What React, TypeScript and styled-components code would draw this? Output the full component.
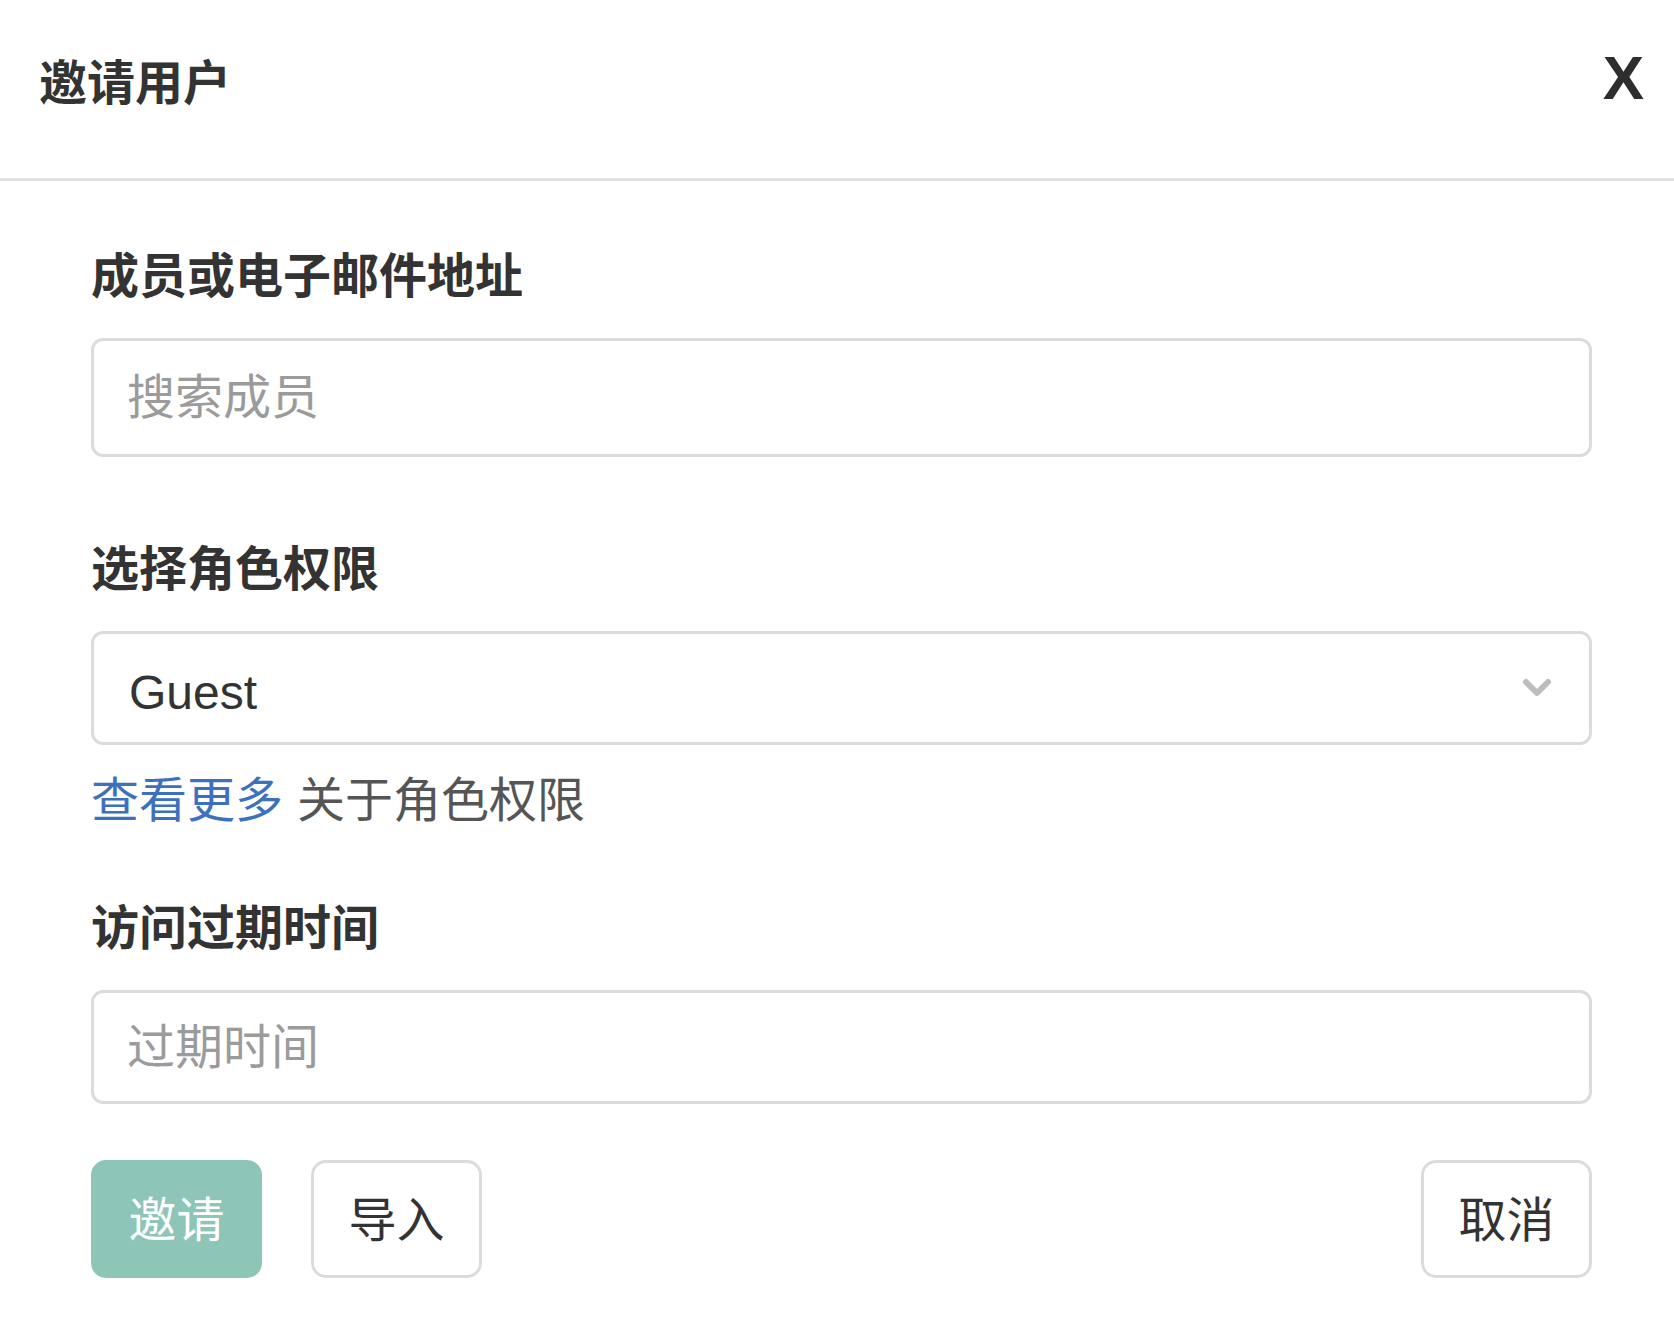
import React from "react";
import styled, { createGlobalStyle } from "styled-components";

const GlobalStyle = createGlobalStyle`
  html, body {
    margin: 0;
    padding: 0;
    background: #ffffff;
  }
  body {
    font-family: "Liberation Sans", "Noto Sans CJK SC", sans-serif;
    color: #333333;
  }
  * { box-sizing: border-box; }
`;

const Modal = styled.div`
  width: 1674px;
  min-height: 1318px;
  background: #ffffff;
  display: flex;
  flex-direction: column;
`;

const Header = styled.header`
  height: 181px;
  border-bottom: 3px solid #e1e1e1;
  display: flex;
  justify-content: space-between;
  align-items: flex-start;
  padding: 46px 30px 0 39px;
`;

const Title = styled.h2`
  margin: 0;
  font-size: 48px;
  line-height: 66px;
  font-weight: 700;
  color: #333333;
  font-family: "Noto Sans CJK SC", sans-serif;
`;

const CloseButton = styled.button`
  margin: 1px 0 0 0;
  padding: 0;
  border: none;
  background: none;
  font-family: "Liberation Sans", sans-serif;
  font-weight: 700;
  font-size: 62px;
  line-height: 62px;
  color: #2e2e2e;
  cursor: pointer;
`;

const Body = styled.div`
  display: flex;
  flex-direction: column;
  padding: 0 82px 0 91px;
`;

const Label = styled.label<{ $top: number }>`
  display: block;
  margin-top: ${(p) => p.$top}px;
  margin-bottom: 33px;
  font-family: "Noto Sans CJK SC", sans-serif;
  font-size: 48px;
  line-height: 66px;
  font-weight: 700;
  color: #333333;
`;

const TextInput = styled.input<{ $h: number }>`
  width: 100%;
  height: ${(p) => p.$h}px;
  border: 3px solid #dcdcdc;
  border-radius: 12px;
  padding: 0 33px;
  font-family: "Liberation Sans", "Noto Sans CJK SC", sans-serif;
  font-size: 48px;
  color: #333333;
  outline: none;
  background: #ffffff;
  &::placeholder {
    color: #9b9b9b;
  }
`;

const SelectBox = styled.div<{ $h: number }>`
  width: 100%;
  height: ${(p) => p.$h}px;
  border: 3px solid #dcdcdc;
  border-radius: 12px;
  padding: 0 37px 0 35px;
  display: flex;
  align-items: center;
  justify-content: space-between;
  font-family: "Liberation Sans", "Noto Sans CJK SC", sans-serif;
  font-size: 48px;
  color: #333333;
  cursor: pointer;
`;

const SelectValue = styled.span`
  padding-top: 8px;
`;

const Help = styled.p`
  margin: 18px 0 0 0;
  font-family: "Noto Sans CJK SC", sans-serif;
  font-size: 48px;
  line-height: 66px;
  color: #555555;
`;

const HelpLink = styled.a`
  color: #3d71be;
  text-decoration: none;
  margin-right: 14px;
`;

const Actions = styled.div`
  margin-top: 56px;
  display: flex;
  align-items: center;
  gap: 49px;
`;

const Button = styled.button<{ $primary?: boolean }>`
  height: 118px;
  width: 171px;
  padding: 0 0 6px;
  display: flex;
  align-items: center;
  justify-content: center;
  border-radius: 15px;
  border: 3px solid ${(p) => (p.$primary ? "#8dc5b7" : "#dcdcdc")};
  background: ${(p) => (p.$primary ? "#8dc5b7" : "#ffffff")};
  color: ${(p) => (p.$primary ? "#ffffff" : "#333333")};
  font-family: "Noto Sans CJK SC", sans-serif;
  font-size: 48px;
  line-height: 1;
  cursor: pointer;
`;

const Spacer = styled.div`
  flex: 1;
`;

const Chevron = () => (
  <svg width="30" height="20" viewBox="0 0 30 20" aria-hidden="true">
    <polyline
      points="4,4 15,15 26,4"
      fill="none"
      stroke="#bdbdbd"
      strokeWidth="6"
      strokeLinecap="round"
      strokeLinejoin="round"
    />
  </svg>
);

export default function App() {
  return (
    <>
      <GlobalStyle />
      <Modal>
        <Header>
          <Title>邀请用户</Title>
          <CloseButton aria-label="关闭">X</CloseButton>
        </Header>
        <Body>
          <Label $top={58}>成员或电子邮件地址</Label>
          <TextInput $h={119} placeholder="搜索成员" />

          <Label $top={75}>选择角色权限</Label>
          <SelectBox $h={114}>
            <SelectValue>Guest</SelectValue>
            <Chevron />
          </SelectBox>
          <Help>
            <HelpLink href="#">查看更多</HelpLink>关于角色权限
          </Help>

          <Label $top={62}>访问过期时间</Label>
          <TextInput $h={114} placeholder="过期时间" />

          <Actions>
            <Button $primary>邀请</Button>
            <Button>导入</Button>
            <Spacer />
            <Button>取消</Button>
          </Actions>
        </Body>
      </Modal>
    </>
  );
}
